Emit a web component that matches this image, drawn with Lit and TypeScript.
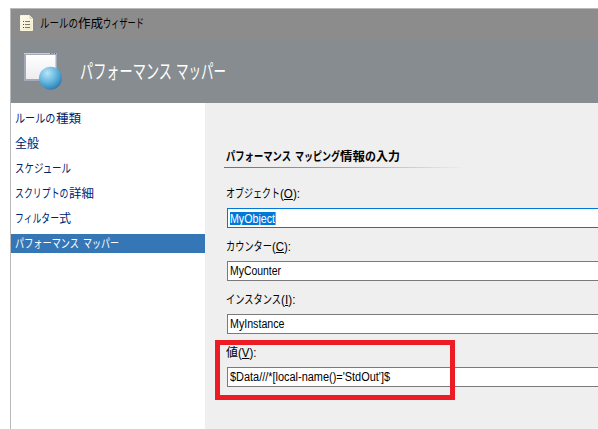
import { LitElement, html, css, svg } from "lit";
import { customElement, property } from "lit/decorators.js";

type Run = [text: string, width: number];

/** A run of text condensed or widened horizontally to a given width. */
@customElement("fit-text")
class FitText extends LitElement {
  @property({ type: Number }) width = 0;
  static styles = css`
    :host { display: inline-block; white-space: pre; flex: none; }
    .run { display: inline-block; transform-origin: 0 50%; }
  `;
  render() {
    return html`<span class="run"><slot></slot></span>`;
  }
  firstUpdated() {
    const run = this.renderRoot.querySelector(".run") as HTMLElement;
    const natural = run.getBoundingClientRect().width;
    this.style.width = `${this.width}px`;
    if (natural) run.style.transform = `scaleX(${this.width / natural})`;
  }
}

const runs = (list: Run[]) =>
  list.map(([text, width]) => html`<fit-text width=${width}>${text}</fit-text>`);

const pageIcon = svg`
  <svg class="page-icon" width="14" height="17" viewBox="0 0 14 17">
    <defs><linearGradient id="paper" x1="0" y1="0" x2="1" y2="1">
      <stop offset="0" stop-color="#fffdf4"/><stop offset="1" stop-color="#f3e9bd"/>
    </linearGradient></defs>
    <path d="M.5 .5H9.5L12.5 3.5V15.5H.5Z" fill="url(#paper)" stroke="#f8f4df"/>
    <path d="M9.5 .5V4H13Z" fill="#d9d5c5"/>
    <path d="M3 6.5h1M3 9.5h1M3 12.5h1" stroke="#4d4d5d"/>
    <path d="M5 6.5H10M5 9.5H10M5 12.5H10" stroke="#77778a"/>
  </svg>`;

const wizardIcon = svg`
  <svg class="wizard-icon" width="40" height="39" viewBox="0 0 40 39">
    <defs>
      <linearGradient id="pane" x1="0" y1="0" x2="0" y2="1">
        <stop offset="0" stop-color="#fff"/><stop offset="1" stop-color="#ededf0"/>
      </linearGradient>
      <radialGradient id="ball" cx=".36" cy=".28" r=".78">
        <stop offset="0" stop-color="#b9e4f6"/><stop offset=".5" stop-color="#66b8e0"/>
        <stop offset=".85" stop-color="#3a8cc0"/><stop offset="1" stop-color="#2c72a5"/>
      </radialGradient>
    </defs>
    <path d="M0 1H33V29H0Z" fill="#a3a9b8"/>
    <path d="M0 1H33V2H0Z" fill="#c9cedb"/>
    <path d="M2 3H31.5V27H2Z" fill="url(#pane)"/>
    <path d="M26 1.5h1.3M28.5 1.5h1.3M31 1.5h1.3" stroke="#626b84"/>
    <circle cx="26.5" cy="26.2" r="11.5" fill="url(#ball)"/>
  </svg>`;

const steps: Run[][] = [
  [["ルールの", 40.5], ["種類", 25]],
  [["全般", 24]],
  [["スケジュール", 56]],
  [["スクリプトの", 53.5], ["詳細", 25]],
  [["フィルター", 44], ["式", 12]],
  [["パフォーマンス", 64], [" ", 4], ["マッパー", 36]],
];

interface Field {
  label: Run;
  key: string;
  keyWidth: number;
  value: string;
  valueWidth: number;
  focused?: boolean;
}

const fields: Field[] = [
  { label: ["オブジェクト", 54], key: "O", keyWidth: 20, value: "MyObject", valueWidth: 45, focused: true },
  { label: ["カウンター", 46], key: "C", keyWidth: 19, value: "MyCounter", valueWidth: 51 },
  { label: ["インスタンス", 55], key: "I", keyWidth: 14.5, value: "MyInstance", valueWidth: 54.5 },
  { label: ["値", 12], key: "V", keyWidth: 18.5, value: "$Data///*[local-name()='StdOut']$", valueWidth: 160 },
];

@customElement("app-root")
class AppRoot extends LitElement {
  static styles = css`
    :host {
      display: block; position: relative; box-sizing: border-box;
      width: 598px; height: 429px; padding: 8px 0 0 10px; overflow: hidden;
      background: #fff; color: #000;
      font: 12px/16px "Liberation Sans", "Noto Sans CJK JP", sans-serif;
    }
    svg { display: block; flex: none; }
    .window {
      box-sizing: border-box; height: 421px; display: flex; flex-direction: column;
      border: solid #b9b9b9; border-width: 1px 0 0 1px;
    }
    .title {
      display: flex; align-items: center; height: 31px; flex: none;
      box-sizing: border-box; padding: 0 0 2px 9px; background: #8c8c8c;
    }
    .page-icon { margin-right: 6px; }
    .title-text { display: flex; font-size: 12.5px; }
    .header {
      display: flex; height: 63px; flex: none; background: #878c90; color: #fff;
      box-sizing: border-box; padding: 12px 0 0 13px;
    }
    .header-text { display: flex; margin: 8px 0 0 16px; font-size: 20px; line-height: 24px; font-weight: 400; }
    .body { display: flex; flex: 1; min-height: 0; }
    .steps {
      width: 194px; box-sizing: border-box; flex: none; padding-top: 6px;
      background: #fff; color: #00216b;
    }
    .step {
      display: flex; align-items: center; height: 19px; margin-bottom: 6px;
      padding-left: 4px; box-sizing: border-box;
    }
    .step.current { background: #3576b6; color: #fff; }
    .content { flex: 1; min-width: 0; background: #efefef; padding: 46px 0 0 19px; }
    .heading { display: flex; height: 18px; padding-left: 2px; font-weight: 700; }
    .rule { width: 243px; height: 1px; background: linear-gradient(90deg, #707070, #a0a0a0 45%, #efefef); }
    .field { padding-left: 3px; height: 53px; }
    .fields { padding-top: 17px; }
    .label { display: flex; height: 23px; line-height: 18px; margin-left: -1.5px; align-items: flex-start; }
    .key { text-decoration: underline; text-underline-offset: 1px; }
    .input {
      display: flex; align-items: center; height: 20px; box-sizing: border-box;
      border: 1px solid #7a7a7a; border-right: 0; background: #fff; padding-left: 2px;
    }
    .input.focused { border-color: #0078d7; }
    .value { display: flex; height: 14px; line-height: 14px; }
    .focused .value { height: 13px; background: #0078d7; color: #fff; border-right: 1px solid #ff8728; }
    .marker {
      position: absolute; left: 215px; top: 340px; width: 240px; height: 60px;
      box-sizing: border-box; border: 5px solid #ed1c24;
    }
  `;

  render() {
    return html`
      <div class="window">
        <div class="title">
          ${pageIcon}
          <div class="title-text">${runs([["ルールの", 38], ["作成", 25], ["ウィザード", 41]])}</div>
        </div>
        <div class="header">
          ${wizardIcon}
          <div class="header-text">${runs([["パフォーマンス", 92], [" ", 4], ["マッパー", 50]])}</div>
        </div>
        <div class="body">
          <nav class="steps">
            ${steps.map((step, i) => html`
              <div class="step ${i === steps.length - 1 ? "current" : ""}">${runs(step)}</div>`)}
          </nav>
          <main class="content">
            <div class="heading">
              ${runs([["パフォーマンス", 65], [" ", 4], ["マッピング", 45], ["情報", 25], ["の", 11], ["入力", 24]])}
            </div>
            <div class="rule"></div>
            <div class="fields">
              ${fields.map((f) => html`
                <div class="field">
                  <div class="label">
                    ${runs([f.label])}<fit-text width=${f.keyWidth}>(<span class="key">${f.key}</span>):</fit-text>
                  </div>
                  <div class="input ${f.focused ? "focused" : ""}">
                    <div class="value">${runs([[f.value, f.valueWidth]])}</div>
                  </div>
                </div>`)}
            </div>
          </main>
        </div>
      </div>
      <div class="marker"></div>
    `;
  }
}
